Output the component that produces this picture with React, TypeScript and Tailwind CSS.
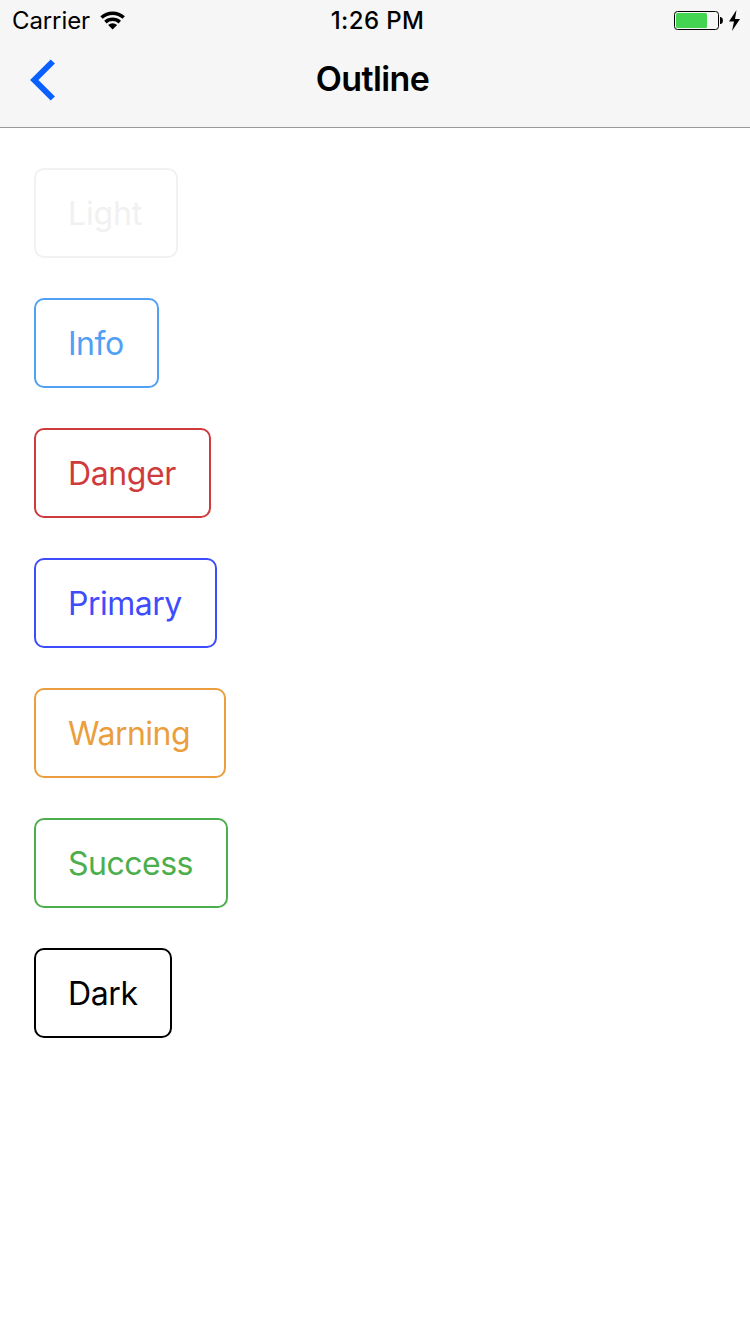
const buttons = [
  { label: 'Light', box: 'w-[144px] border-[#f1f1f1] text-[#f1f1f1]', text: 'tracking-[-0.15px]' },
  { label: 'Info', box: 'w-[125px] border-[#50a0f5] text-[#50a0f5]', text: 'tracking-[-0.5px]' },
  { label: 'Danger', box: 'w-[177px] border-[#cf3b3c] text-[#cf3b3c]', text: 'tracking-[-0.4px]' },
  { label: 'Primary', box: 'w-[183px] border-[#3f4cfb] text-[#3f4cfb]', text: 'tracking-[-0.5px]' },
  { label: 'Warning', box: 'w-[192px] border-[#eb9e3e] text-[#eb9e3e]', text: 'tracking-[-0.5px]' },
  { label: 'Success', box: 'w-[194px] border-[#4cae4c] text-[#4cae4c]', text: 'tracking-[-0.5px]' },
  { label: 'Dark', box: 'w-[138px] border-black text-black', text: 'tracking-[-0.4px]' },
];

function StatusBar() {
  return (
    <div className="grid h-10 grid-cols-3 items-center pl-3 pr-[9px] pt-px text-[24px] leading-10">
      <div className="flex items-center gap-[10px]">
        <span className="tracking-[-0.1px]">Carrier</span>
        <svg className="mb-[2px]" width="26" height="19" viewBox="0 0 26 19" fill="none" stroke="black" strokeWidth="3.5">
          <path d="M1.5 6.5a16.5 16.5 0 0 1 22.2 0" />
          <path d="M5.4 11.1a10.6 10.6 0 0 1 14.4 0" />
          <path d="M12.6 18.6l-4.5-4.6a6.6 6.6 0 0 1 9 0z" fill="black" stroke="none" />
        </svg>
      </div>
      <span className="pl-[2px] text-center font-[550] tracking-[0.4px]">1:26 PM</span>
      <svg className="justify-self-end" width="67" height="22" viewBox="0 0 67 22">
        <rect x=".5" y="1.5" width="44" height="18" rx="3" fill="none" stroke="black" />
        <rect x="2" y="3" width="31" height="15" rx="1.5" fill="#43d551" />
        <path d="M46 7h.8q2.2.6 2.2 3.5T46.800 14H46z" />
        <path d="M62.5 0l-7.5 11.500h5l-2 9.500 8-12h-5z" />
      </svg>
    </div>
  );
}

export default function App() {
  return (
    <div className="min-h-[1334px] w-[750px] bg-white font-['Inter','Liberation_Sans',sans-serif] text-black">
      <header className="h-32 border-b border-[#98989a] bg-[#f6f6f6]">
        <StatusBar />
        <nav className="grid h-20 grid-cols-3 items-center">
          <button aria-label="Back" className="justify-self-start pl-[30px]">
            <svg width="26" height="42" viewBox="0 0 26 42" fill="none" stroke="#0a60ff" strokeWidth="6">
              <path d="M22.8 2.5L4.3 21l18.500 18.500" />
            </svg>
          </button>
          <h1 className="pr-[5px] pb-[3px] text-center text-[34px] font-semibold tracking-[-0.6px]">Outline</h1>
        </nav>
      </header>
      <main className="flex flex-col items-start gap-10 pl-[34px] pt-10">
        {buttons.map(({ label, box, text }) => (
          <button key={label} className={`flex h-[90px] items-center rounded-[10px] border-2 pl-8 pt-[2px] text-[32px] ${box}`}>
            <span className={text}>{label}</span>
          </button>
        ))}
      </main>
    </div>
  );
}
